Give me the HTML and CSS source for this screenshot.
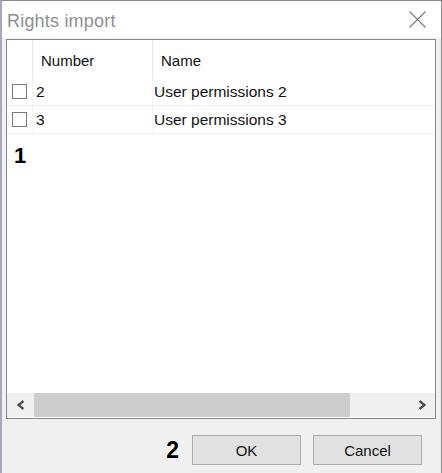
FILE: index.html
```html
<!DOCTYPE html>
<html>
<head>
<meta charset="utf-8">
<link rel="stylesheet" href="styles.css">
</head>
<body>
<div class="window">
  <div class="titlebar">
    <span class="title">Rights import</span>
    <svg class="close" width="17" height="17" viewBox="0 0 17 17"><path d="M0.5 0.5 L16.5 16.5 M16.5 0.5 L0.5 16.5" stroke="#7a7a7a" stroke-width="1.1" fill="none"/></svg>
  </div>
  <div class="content">
    <div class="list">
      <div class="row head">
        <div class="cell c0"></div>
        <div class="cell c1">Number</div>
        <div class="cell c2">Name</div>
      </div>
      <div class="row item">
        <div class="cell c0"><span class="check"></span></div>
        <div class="cell c1">2</div>
        <div class="cell c2">User permissions 2</div>
      </div>
      <div class="row item">
        <div class="cell c0"><span class="check"></span></div>
        <div class="cell c1">3</div>
        <div class="cell c2">User permissions 3</div>
      </div>
      <div class="annot annot1">1</div>
      <div class="fill"></div>
      <div class="hscroll">
        <div class="sbtn"><svg width="10" height="10" viewBox="0 0 10 10"><path d="M7.5 1 L2.5 5 L7.5 9" stroke="#505050" stroke-width="2.3" fill="none"/></svg></div>
        <div class="track"><div class="thumb"></div></div>
        <div class="sbtn"><svg width="10" height="10" viewBox="0 0 10 10"><path d="M2.5 1 L7.5 5 L2.5 9" stroke="#505050" stroke-width="2.3" fill="none"/></svg></div>
      </div>
    </div>
    <div class="footer">
      <span class="annot annot2">2</span>
      <button class="btn">OK</button>
      <button class="btn">Cancel</button>
    </div>
  </div>
</div>
</body>
</html>
```
FILE: styles.css
```css
html, body {
  margin: 0;
  padding: 0;
  background: #f0f0f0;
}
body {
  font-family: "Liberation Sans", Arial, sans-serif;
  width: 442px;
  height: 473px;
  overflow: hidden;
}
.window {
  width: 442px;
  height: 480px;
  box-sizing: border-box;
  border-top: 1px solid #8a8a8a;
  border-left: 2px solid #a6a6bc;
  border-right: 1px solid #8a8a8a;
  background: #f0f0f0;
  display: flex;
  flex-direction: column;
}
.titlebar {
  height: 37px;
  background: #fff;
  display: flex;
  align-items: center;
  justify-content: space-between;
  padding: 3px 15px 0 5px;
  box-sizing: border-box;
}
.title {
  font-size: 18px;
  color: #8e8e8e;
  letter-spacing: 0.2px;
}
.close {
  margin-top: -4px;
}
.content {
  padding: 1px 5px 0 4px;
}
.list {
  width: 430px;
  height: 380px;
  box-sizing: border-box;
  border: 1px solid #828790;
  background: #fff;
  display: flex;
  flex-direction: column;
}
.row {
  display: grid;
  grid-template-columns: 26px 120px 1fr;
  font-size: 15.5px;
  color: #111;
}
.head {
  height: 38px;
  font-size: 15px;
}
.head .cell {
  padding-top: 3px;
}
.head .c0, .head .c1 {
  border-right: 1px solid #e5e5e5;
}
.head .c1, .head .c2 {
  padding-left: 8px;
}
.item {
  height: 28px;
  border-bottom: 1px solid #f0f0f0;
  box-sizing: border-box;
}
.item .c0, .item .c1 {
  border-right: 1px solid #f2f2f2;
}
.item .c1 {
  padding-left: 3px;
}
.item .c2 {
  padding-left: 1px;
}
.cell {
  display: flex;
  align-items: center;
  box-sizing: border-box;
  white-space: nowrap;
}
.c0 {
  padding-left: 5px;
}
.check {
  width: 13px;
  height: 13px;
  border: 1px solid #7a7a7a;
  background: #fff;
}
.annot {
  font-weight: bold;
  color: #000;
  line-height: 1;
}
.annot1 {
  font-size: 22px;
  margin: 11px 0 0 7px;
}
.fill {
  flex: 1;
}
.hscroll {
  height: 24px;
  margin-bottom: 1px;
  background: #f0f0f0;
  display: flex;
}
.sbtn {
  width: 27px;
  display: flex;
  align-items: center;
  justify-content: center;
}
.track {
  flex: 1;
  display: flex;
}
.thumb {
  width: 316px;
  background: #cdcdcd;
}
.footer {
  display: flex;
  justify-content: flex-end;
  align-items: center;
  padding: 16px 14px 0 0;
}
.annot2 {
  font-size: 23px;
  margin: 1px 13px 0 0;
}
.btn {
  width: 109px;
  height: 30px;
  margin-left: 12px;
  background: #e1e1e1;
  border: 1px solid #adadad;
  font-family: "Liberation Sans", Arial, sans-serif;
  font-size: 15px;
  color: #111;
  padding: 0;
}
.annot2 + .btn {
  margin-left: 0;
}
```
